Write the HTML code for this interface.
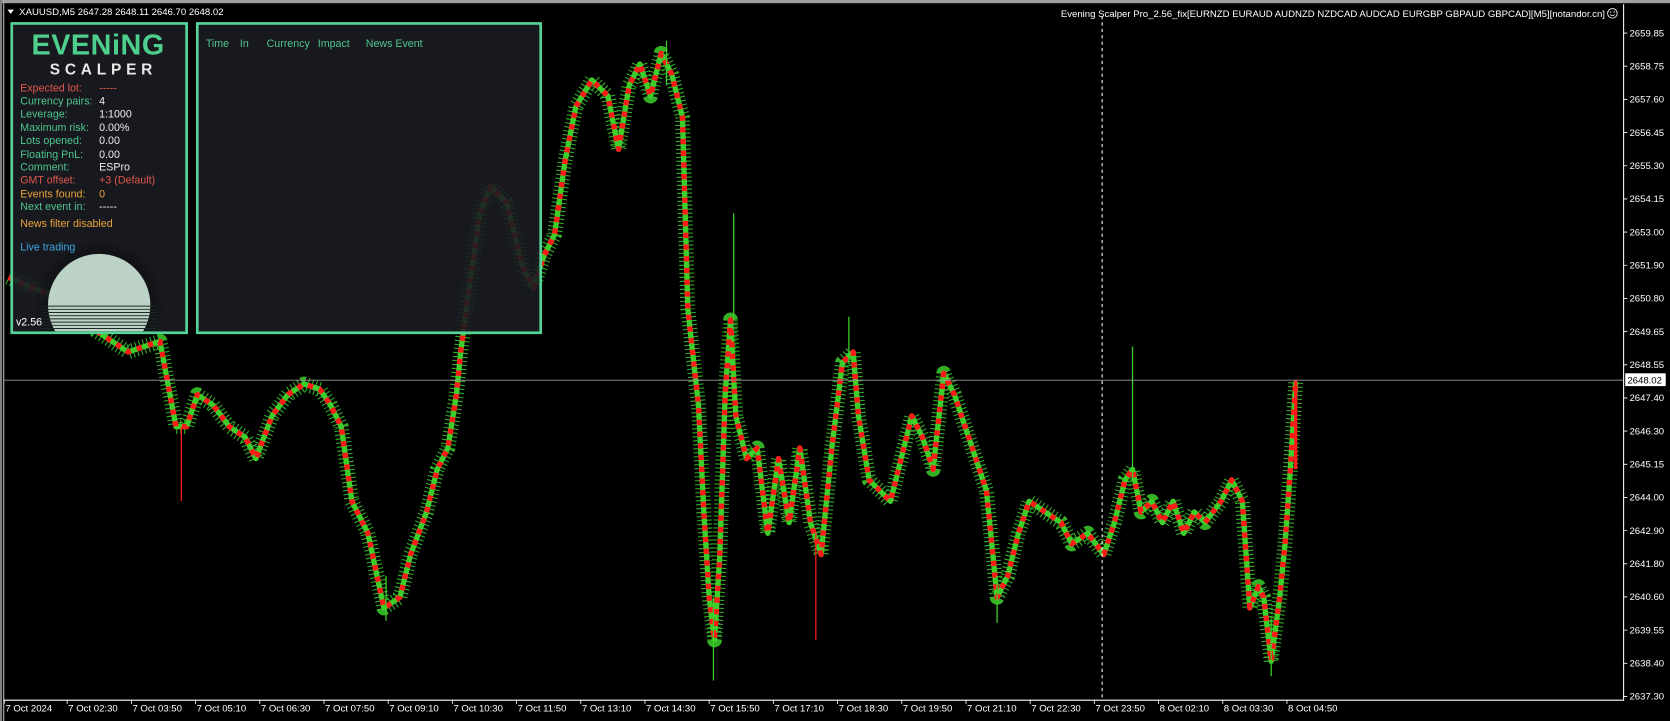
<!DOCTYPE html>
<html><head><meta charset="utf-8"><style>
html,body{margin:0;padding:0;background:#000;overflow:hidden}
svg{display:block}
text{font-family:"Liberation Sans",sans-serif}
</style></head><body>
<svg width="1670" height="721" viewBox="0 0 1566 676" preserveAspectRatio="none" xmlns="http://www.w3.org/2000/svg">
<rect x="0" y="0" width="1566" height="676" fill="#000"/>
<rect x="0" y="0" width="1566" height="3" fill="#a0a0a0"/>
<rect x="0" y="0" width="2" height="676" fill="#808080"/>
<line x1="3.5" y1="3" x2="3.5" y2="676" stroke="#bbb" stroke-width="1"/>
<!-- price path approximating candles -->
<g fill="none" stroke-linejoin="round">
<polyline id="pp" stroke="#3ccf2c" stroke-width="14" stroke-dasharray="1,2.75" stroke-opacity="0.85" points="8,260 30,270 60,280 90,310 120,330 150,320 165,400 175,400 185,370 200,380 215,400 230,410 240,430 255,390 270,370 285,360 300,365 310,380 320,400 330,470 345,500 360,570 375,560 385,520 400,480 410,440 420,420 428,370 432,330 440,270 450,200 460,175 475,190 490,250 500,270 510,240 520,220 530,150 540,100 555,75 570,90 580,140 590,80 600,60 610,90 620,50 630,70 640,110 645,290 655,380 660,480 665,560 670,600 675,520 680,370 685,300 690,390 700,430 710,420 715,460 720,500 730,430 740,490 750,420 760,490 770,520 780,420 790,340 800,330 805,390 815,450 825,460 835,470 845,430 855,390 865,410 875,440 885,350 895,370 905,400 915,430 925,460 935,560 945,540 955,500 965,470 980,480 995,490 1005,510 1020,500 1035,520 1045,490 1055,450 1062,440 1070,480 1080,470 1090,490 1100,470 1110,500 1120,480 1130,490 1145,470 1155,450 1165,470 1172,570 1180,550 1185,560 1192,620 1200,560 1205,510 1210,440 1215,358"/>
<polyline stroke="#3ccf2c" stroke-width="5" points="8,260 30,270 60,280 90,310 120,330 150,320 165,400 175,400 185,370 200,380 215,400 230,410 240,430 255,390 270,370 285,360 300,365 310,380 320,400 330,470 345,500 360,570 375,560 385,520 400,480 410,440 420,420 428,370 432,330 440,270 450,200 460,175 475,190 490,250 500,270 510,240 520,220 530,150 540,100 555,75 570,90 580,140 590,80 600,60 610,90 620,50 630,70 640,110 645,290 655,380 660,480 665,560 670,600 675,520 680,370 685,300 690,390 700,430 710,420 715,460 720,500 730,430 740,490 750,420 760,490 770,520 780,420 790,340 800,330 805,390 815,450 825,460 835,470 845,430 855,390 865,410 875,440 885,350 895,370 905,400 915,430 925,460 935,560 945,540 955,500 965,470 980,480 995,490 1005,510 1020,500 1035,520 1045,490 1055,450 1062,440 1070,480 1080,470 1090,490 1100,470 1110,500 1120,480 1130,490 1145,470 1155,450 1165,470 1172,570 1180,550 1185,560 1192,620 1200,560 1205,510 1210,440 1215,358"/>
<polyline stroke="#ff1a1a" stroke-width="5" stroke-dasharray="5,6" points="8,260 30,270 60,280 90,310 120,330 150,320 165,400 175,400 185,370 200,380 215,400 230,410 240,430 255,390 270,370 285,360 300,365 310,380 320,400 330,470 345,500 360,570 375,560 385,520 400,480 410,440 420,420 428,370 432,330 440,270 450,200 460,175 475,190 490,250 500,270 510,240 520,220 530,150 540,100 555,75 570,90 580,140 590,80 600,60 610,90 620,50 630,70 640,110 645,290 655,380 660,480 665,560 670,600 675,520 680,370 685,300 690,390 700,430 710,420 715,460 720,500 730,430 740,490 750,420 760,490 770,520 780,420 790,340 800,330 805,390 815,450 825,460 835,470 845,430 855,390 865,410 875,440 885,350 895,370 905,400 915,430 925,460 935,560 945,540 955,500 965,470 980,480 995,490 1005,510 1020,500 1035,520 1045,490 1055,450 1062,440 1070,480 1080,470 1090,490 1100,470 1110,500 1120,480 1130,490 1145,470 1155,450 1165,470 1172,570 1180,550 1185,560 1192,620 1200,560 1205,510 1210,440 1215,358"/>
</g>
<g stroke-width="1.2">
<line x1="1215" y1="356" x2="1215" y2="440" stroke="#ff1a1a" stroke-width="3"/>
<line x1="1062" y1="325" x2="1062" y2="450" stroke="#3ccf2c"/>
<line x1="688" y1="200" x2="688" y2="300" stroke="#3ccf2c"/>
<line x1="669" y1="560" x2="669" y2="638" stroke="#3ccf2c"/>
<line x1="625" y1="38" x2="625" y2="80" stroke="#3ccf2c"/>
<line x1="1192" y1="580" x2="1192" y2="634" stroke="#3ccf2c"/>
<line x1="796" y1="297" x2="796" y2="340" stroke="#3ccf2c"/>
<line x1="362" y1="540" x2="362" y2="582" stroke="#3ccf2c"/>
<line x1="170" y1="400" x2="170" y2="470" stroke="#ff1a1a"/>
<line x1="765" y1="500" x2="765" y2="600" stroke="#ff1a1a"/>
<line x1="935" y1="540" x2="935" y2="584" stroke="#3ccf2c"/>
</g>
<!-- current price line -->
<line x1="4" y1="356.5" x2="1522" y2="356.5" stroke="#9a9a9a" stroke-width="0.8"/>
<line x1="1033.5" y1="15" x2="1033.5" y2="656" stroke="#fff" stroke-width="1" stroke-dasharray="3,3"/>
<line x1="1522.5" y1="4" x2="1522.5" y2="656" stroke="#fff" stroke-width="1"/>
<line x1="4" y1="656.5" x2="1523" y2="656.5" stroke="#fff" stroke-width="1"/>
<g fill="#fff" font-size="9">
<g stroke="#fff" stroke-width="0.8">
<path d="M1522 31h4M1522 62.1h4M1522 93.2h4M1522 124.3h4M1522 155.4h4M1522 186.5h4M1522 217.6h4M1522 248.7h4M1522 279.8h4M1522 310.9h4M1522 342h4M1522 373.1h4M1522 404.2h4M1522 435.3h4M1522 466.4h4M1522 497.5h4M1522 528.6h4M1522 559.7h4M1522 590.8h4M1522 621.9h4M1522 653h4"/>
<path d="M4 656v4M63 656v4M123.2 656v4M183.4 656v4M243.6 656v4M303.8 656v4M364 656v4M424.2 656v4M484.4 656v4M544.6 656v4M604.8 656v4M665 656v4M725.2 656v4M785.4 656v4M845.6 656v4M905.8 656v4M966 656v4M1026.2 656v4M1086.4 656v4M1146.6 656v4M1206.8 656v4"/>
</g>
<text x="1528" y="34">2659.85</text><text x="1528" y="65.1">2658.75</text><text x="1528" y="96.2">2657.60</text><text x="1528" y="127.3">2656.45</text><text x="1528" y="158.4">2655.30</text><text x="1528" y="189.5">2654.15</text><text x="1528" y="220.6">2653.00</text><text x="1528" y="251.7">2651.90</text><text x="1528" y="282.8">2650.80</text><text x="1528" y="313.9">2649.65</text><text x="1528" y="345">2648.55</text><text x="1528" y="376.1">2647.40</text><text x="1528" y="407.2">2646.30</text><text x="1528" y="438.3">2645.15</text><text x="1528" y="469.4">2644.00</text><text x="1528" y="500.5">2642.90</text><text x="1528" y="531.6">2641.80</text><text x="1528" y="562.7">2640.60</text><text x="1528" y="593.8">2639.55</text><text x="1528" y="624.9">2638.40</text><text x="1528" y="656">2637.30</text>
<text x="5" y="667">7 Oct 2024</text><text x="64" y="667">7 Oct 02:30</text><text x="124.2" y="667">7 Oct 03:50</text><text x="184.4" y="667">7 Oct 05:10</text><text x="244.6" y="667">7 Oct 06:30</text><text x="304.8" y="667">7 Oct 07:50</text><text x="365" y="667">7 Oct 09:10</text><text x="425.2" y="667">7 Oct 10:30</text><text x="485.4" y="667">7 Oct 11:50</text><text x="545.6" y="667">7 Oct 13:10</text><text x="605.8" y="667">7 Oct 14:30</text><text x="666" y="667">7 Oct 15:50</text><text x="726.2" y="667">7 Oct 17:10</text><text x="786.4" y="667">7 Oct 18:30</text><text x="846.6" y="667">7 Oct 19:50</text><text x="906.8" y="667">7 Oct 21:10</text><text x="967" y="667">7 Oct 22:30</text><text x="1027.2" y="667">7 Oct 23:50</text><text x="1087.4" y="667">8 Oct 02:10</text><text x="1147.6" y="667">8 Oct 03:30</text><text x="1207.8" y="667">8 Oct 04:50</text>
</g>
<rect x="1524" y="350" width="38" height="12" fill="#fff"/>
<text x="1526" y="359.5" font-size="9" fill="#000">2648.02</text>
<polygon points="7,9 13,9 10,13" fill="#fff"/>
<text x="18" y="14" font-size="9" fill="#fff">XAUUSD,M5  2647.28 2648.11 2646.70 2648.02</text>
<text x="1505" y="16" font-size="9" fill="#fff" text-anchor="end">Evening Scalper Pro_2.56_fix[EURNZD EURAUD AUDNZD NZDCAD AUDCAD EURGBP GBPAUD GBPCAD][M5][notandor.cn]</text>
<circle cx="1512" cy="12.5" r="4.5" fill="none" stroke="#fff" stroke-width="0.8"/>
<circle cx="1510.4" cy="11.3" r="0.6" fill="#fff"/><circle cx="1513.6" cy="11.3" r="0.6" fill="#fff"/>
<path d="M1509.8 13.6 Q1512 15.8 1514.2 13.6" fill="none" stroke="#fff" stroke-width="0.7"/>
<defs><clipPath id="cp"><rect x="11" y="22" width="164" height="290"/></clipPath>
<radialGradient id="sh" cx="0.5" cy="0.5" r="0.5"><stop offset="0.6" stop-color="#000" stop-opacity="0.5"/><stop offset="1" stop-color="#000" stop-opacity="0"/></radialGradient></defs>
<rect x="11" y="22" width="164" height="290" fill="#1b1c21" fill-opacity="0.9"/>
<g clip-path="url(#cp)">
<circle cx="93" cy="286" r="62" fill="url(#sh)"/>
<circle cx="93" cy="286" r="48" fill="#cfe8da" fill-opacity="0.9"/>
<g stroke="#1b2a22" stroke-width="0.9">
<path d="M40 287H146M40 290H146M40 293H146M40 296H146M40 299H146M40 302H146M40 305H146M40 308H146M40 311H146"/>
</g>
</g>
<rect x="11" y="22" width="164" height="290" fill="none" stroke="#55d49a" stroke-width="2.5"/>
<text x="92" y="51" font-size="27" font-weight="bold" fill="#4fcf8e" text-anchor="middle" letter-spacing="0.5">EVENiNG</text>
<text x="97" y="70" font-size="14.5" font-weight="bold" fill="#e8e8e8" text-anchor="middle" letter-spacing="4.5">SCALPER</text>
<g font-size="10">
<text x="19" y="86" fill="#e0584c">Expected lot:</text><text x="93" y="86" fill="#e0584c">-----</text>
<text x="19" y="98" fill="#4ec58e">Currency pairs:</text><text x="93" y="98" fill="#eee">4</text>
<text x="19" y="110" fill="#4ec58e">Leverage:</text><text x="93" y="110" fill="#eee">1:1000</text>
<text x="19" y="123" fill="#4ec58e">Maximum risk:</text><text x="93" y="123" fill="#eee">0.00%</text>
<text x="19" y="135" fill="#4ec58e">Lots opened:</text><text x="93" y="135" fill="#eee">0.00</text>
<text x="19" y="148" fill="#4ec58e">Floating PnL:</text><text x="93" y="148" fill="#eee">0.00</text>
<text x="19" y="160" fill="#4ec58e">Comment:</text><text x="93" y="160" fill="#eee">ESPro</text>
<text x="19" y="172" fill="#e0584c">GMT offset:</text><text x="93" y="172" fill="#e0584c">+3 (Default)</text>
<text x="19" y="185" fill="#e8a23a">Events found:</text><text x="93" y="185" fill="#e8a23a">0</text>
<text x="19" y="197" fill="#4ec58e">Next event in:</text><text x="93" y="197" fill="#eee">-----</text>
<text x="19" y="213" fill="#e8a23a">News filter disabled</text>
<text x="19" y="235" fill="#3ea6e2">Live trading</text>
<text x="15" y="305" fill="#fff">v2.56</text>
</g>
<rect x="185" y="22" width="322" height="290" fill="#1b1c21" fill-opacity="0.9" stroke="#55d49a" stroke-width="2.5"/>
<g font-size="10" fill="#4ec58e">
<text x="193" y="44">Time</text><text x="225" y="44">In</text><text x="250" y="44">Currency</text><text x="298" y="44">Impact</text><text x="343" y="44">News Event</text>
</g>
</svg>
</body></html>
